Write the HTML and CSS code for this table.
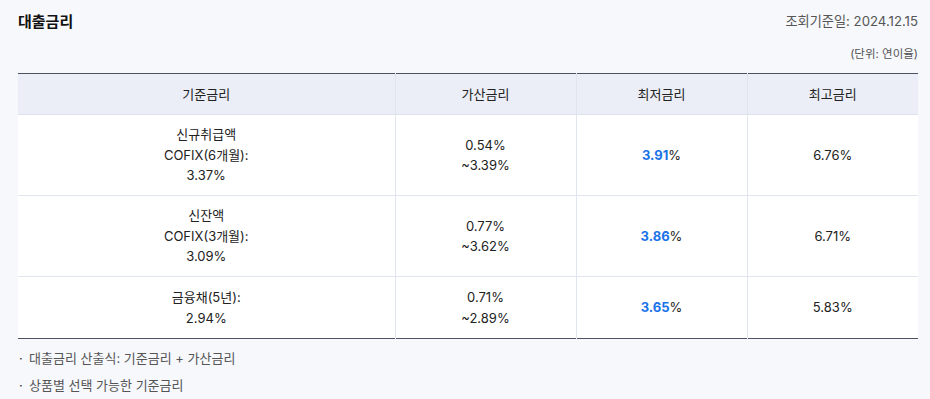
FILE: index.html
```html
<!DOCTYPE html>
<html lang="ko">
<head>
<meta charset="utf-8">
<link rel="stylesheet" href="styles.css">
</head>
<body>
<div class="wrap">
  <div class="head">
    <h2 class="title">대출금리</h2>
    <div class="meta">
      <div class="date">조회기준일: 2024.12.15</div>
      <div class="unit">(단위: 연이율)</div>
    </div>
  </div>
  <table class="rates">
    <colgroup>
      <col class="c1"><col class="c2"><col class="c3"><col class="c4">
    </colgroup>
    <thead>
      <tr><th>기준금리</th><th>가산금리</th><th>최저금리</th><th>최고금리</th></tr>
    </thead>
    <tbody>
      <tr class="r1">
        <td>신규취급액<br>COFIX(6개월):<br>3.37%</td>
        <td>0.54%<br>~3.39%</td>
        <td><strong class="hi">3.91</strong>%</td>
        <td>6.76%</td>
      </tr>
      <tr class="r1">
        <td>신잔액<br>COFIX(3개월):<br>3.09%</td>
        <td>0.77%<br>~3.62%</td>
        <td><strong class="hi">3.86</strong>%</td>
        <td>6.71%</td>
      </tr>
      <tr class="r3">
        <td>금융채(5년):<br>2.94%</td>
        <td>0.71%<br>~2.89%</td>
        <td><strong class="hi">3.65</strong>%</td>
        <td>5.83%</td>
      </tr>
    </tbody>
  </table>
  <ul class="notes">
    <li>대출금리 산출식: 기준금리 + 가산금리</li>
    <li>상품별 선택 가능한 기준금리</li>
  </ul>
</div>
</body>
</html>
```

FILE: styles.css
```css
html, body {
  margin: 0;
  padding: 0;
  background: #f6f8fc;
}
body {
  font-family: "Inter", "Noto Sans CJK KR", sans-serif;
  color: #222;
}
.wrap {
  padding: 0 12px 0 18px;
}
.head {
  display: flex;
  justify-content: space-between;
  align-items: flex-start;
  height: 73px;
}
.title {
  margin: 12px 0 0;
  font-size: 15px;
  font-weight: 700;
  color: #111;
  line-height: 20px;
}
.meta {
  text-align: right;
}
.date {
  margin-top: 11px;
  font-size: 13.2px;
  line-height: 20px;
  color: #555;
}
.unit {
  margin-top: 15px;
  font-size: 11.5px;
  line-height: 16px;
  color: #555;
}
.rates {
  width: 900px;
  border-collapse: collapse;
  table-layout: fixed;
  border-top: 1px solid #4c5363;
  border-bottom: 1px solid #4c5363;
  font-size: 13px;
  line-height: 20.5px;
}
.c1 { width: 377px; }
.c2 { width: 181px; }
.c3 { width: 171px; }
.c4 { width: 171px; }
.rates th {
  background: #ebeef6;
  font-weight: 400;
  height: 40px;
  padding: 0;
  color: #222;
  border-left: 1px solid #dfe4ee;
  border-bottom: 1px solid #dde3ee;
}
.rates td {
  background: #fff;
  text-align: center;
  padding: 0;
  border-left: 1px solid #e1e5ee;
  border-bottom: 1px solid #e1e5ee;
}
.rates th:first-child, .rates td:first-child {
  border-left: none;
}
.rates tr:last-child td {
  border-bottom: none;
}
.r1 td { height: 80px; }
.r3 td { height: 61px; }
.hi {
  color: #1a73e8;
  font-weight: 700;
}
.notes {
  list-style: none;
  margin: 0;
  padding: 9px 0 0 1px;
  font-size: 13px;
  color: #555;
}
.notes li {
  position: relative;
  padding-left: 10px;
  line-height: 20px;
  margin-bottom: 7px;
}
.notes li::before {
  content: "·";
  position: absolute;
  left: 0;
  top: 0;
  color: #333;
}
```
